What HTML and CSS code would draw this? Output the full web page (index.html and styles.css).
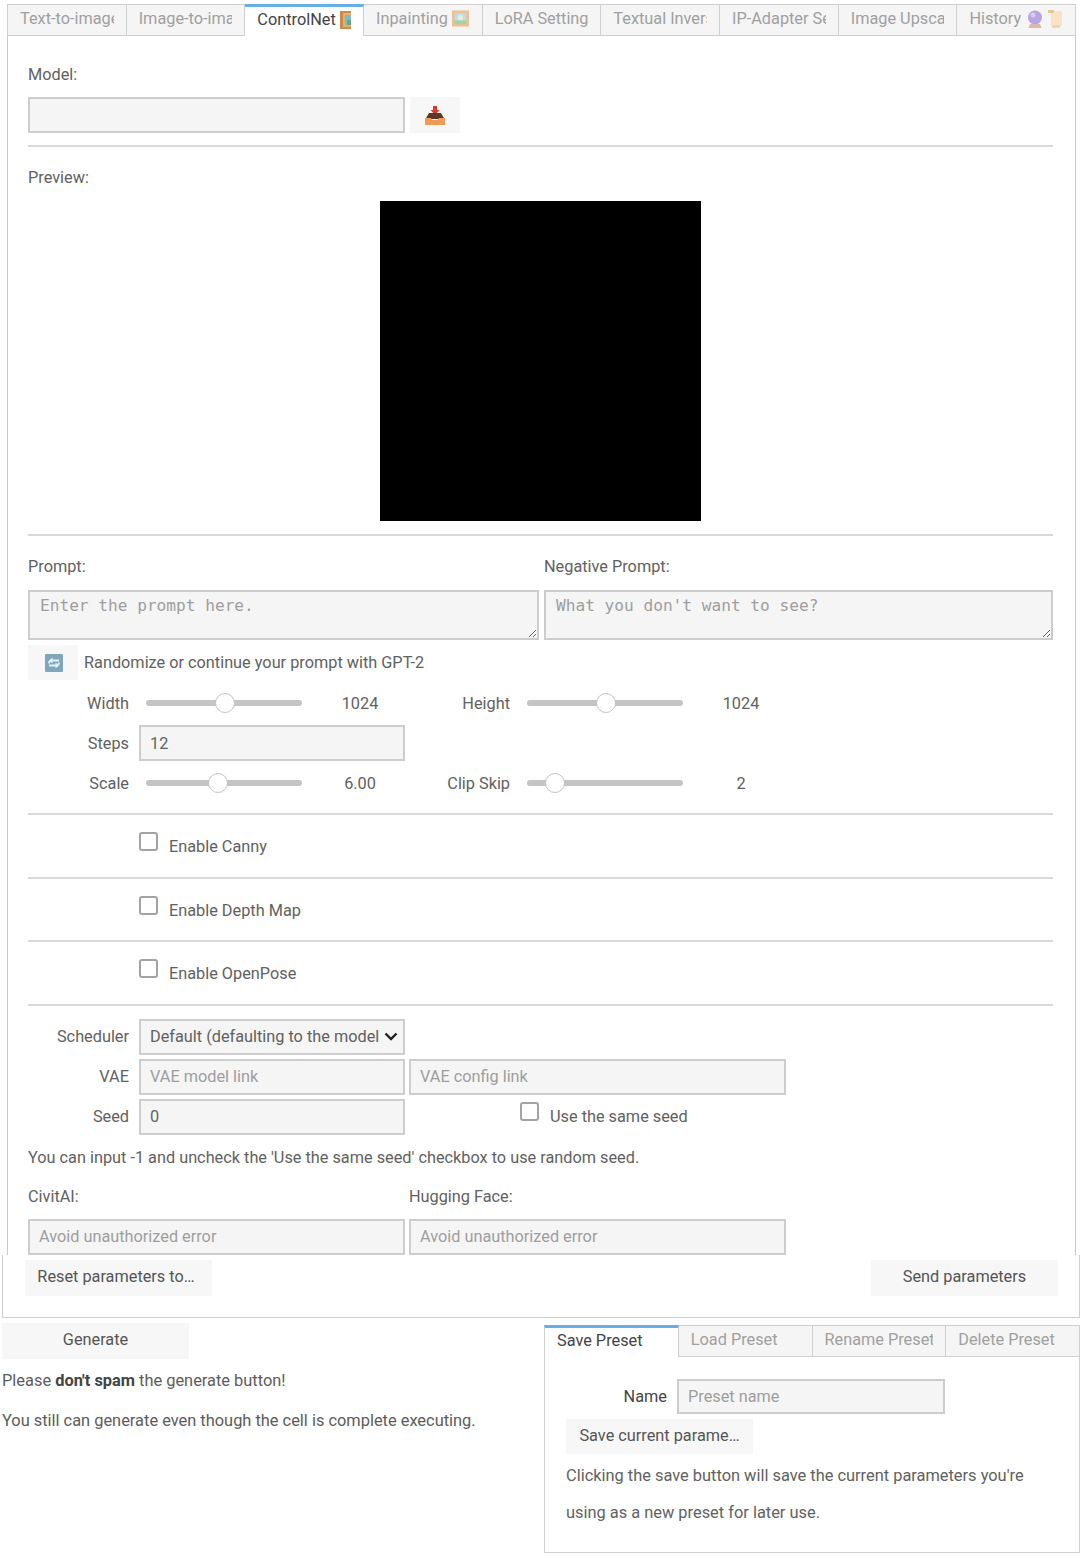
FILE: index.html
```html
<!DOCTYPE html>
<html lang="en">
<head>
    <meta charset="UTF-8">
    <meta name="viewport" content="width=device-width, initial-scale=1.0">
    <title>ControlNet</title>
    <link rel="stylesheet" href="styles.css">
</head>
<body>
    <div class="main-panel">
        <div class="tabs">
            <div class="tab"><span class="tab-text">Text-to-image</span></div>
            <div class="tab"><span class="tab-text">Image-to-image</span></div>
            <div class="tab active"><span class="tab-text">ControlNet
                <svg class="tab-icon narrow" viewBox="0 0 12 18"><rect width="12" height="18" fill="#c98a4e"/><rect x="3" y="2" width="9" height="14" fill="#e8b06a"/><rect x="5" y="4" width="7" height="10" fill="#7cb9c9"/><rect x="7" y="9" width="5" height="5" fill="#6aa57c"/></svg>
            </span></div>
            <div class="tab"><span class="tab-text">Inpainting
                <svg class="tab-icon picture" viewBox="0 0 17 16"><rect width="17" height="16" fill="#efc08e"/><rect x="2.5" y="2.5" width="12" height="11" fill="#bcdcec"/><circle cx="8.5" cy="7" r="2.6" fill="#e9eedc"/><rect x="2.5" y="10" width="12" height="3.5" fill="#a9cfa6"/></svg>
            </span></div>
            <div class="tab"><span class="tab-text">LoRA Setting</span></div>
            <div class="tab"><span class="tab-text">Textual Inversion</span></div>
            <div class="tab"><span class="tab-text">IP-Adapter Settings</span></div>
            <div class="tab"><span class="tab-text">Image Upscaler</span></div>
            <div class="tab"><span class="tab-text">History
                <svg class="tab-icon ball" viewBox="0 0 16 18"><circle cx="8" cy="7.5" r="7" fill="#b9a4e6"/><circle cx="6" cy="5" r="2.5" fill="#d9cdf5"/><path d="M3 14h10l1.5 4h-13z" fill="#dcb9a8"/></svg>
                <svg class="tab-icon scroll" viewBox="0 0 15 18"><rect x="3" y="1" width="11" height="15" fill="#fae3c4"/><rect y="0" width="6" height="3" fill="#e8c594"/><rect x="4" y="15" width="8" height="3" fill="#f0d5ae"/></svg>
            </span></div>
        </div>

        <div class="panel-body">
            <div class="label">Model:</div>
            <div class="row model-row">
                <input class="field wide" type="text">
                <button class="icon-btn">
                    <svg class="btn-icon" viewBox="0 0 20 19"><path d="M8 0h4v4h2.5L10 9 5.5 4H8z" fill="#d8392f"/><path d="M4 7h12l3.5 6H.5z" fill="#5e3626"/><path d="M0 12h6l1 2h6l1-2h6v7H0z" fill="#f09a55"/></svg>
                </button>
            </div>
            <div class="line line-model"></div>

            <div class="label preview-label">Preview:</div>
            <div class="preview"></div>
            <div class="line line-preview"></div>

            <div class="prompt-labels">
                <div class="label">Prompt:</div>
                <div class="label">Negative Prompt:</div>
            </div>
            <div class="prompts">
                <textarea class="prompt" placeholder="Enter the prompt here."></textarea>
                <textarea class="prompt" placeholder="What you don't want to see?"></textarea>
            </div>
            <div class="row random-row">
                <button class="icon-btn short">
                    <svg class="btn-icon small" viewBox="0 0 18 18"><rect width="18" height="18" rx="1" fill="#7ea6bd"/><path d="M14 6.5H7a3 3 0 0 0-3 3M4 11.5h7a3 3 0 0 0 3-3" fill="none" stroke="#e6f0f4" stroke-width="1.8"/><path d="M7.5 3.5v6L4 6.5zM10.500 8.500v6l3.500-3z" fill="#e6f0f4"/></svg>
                </button>
                <span class="random-text">Randomize or continue your prompt with GPT-2</span>
            </div>

            <div class="row sliders">
                <div class="slider-box">
                    <label class="side-label">Width</label>
                    <input class="slider" type="range" min="0" max="2020" value="1024">
                    <span class="slider-value">1024</span>
                </div>
                <div class="slider-box">
                    <label class="side-label">Height</label>
                    <input class="slider" type="range" min="0" max="2020" value="1024">
                    <span class="slider-value">1024</span>
                </div>
            </div>
            <div class="row next">
                <label class="side-label">Steps</label>
                <input class="field medium has-value" type="text" value="12">
            </div>
            <div class="row next">
                <div class="slider-box">
                    <label class="side-label">Scale</label>
                    <input class="slider" type="range" min="0" max="13.2" step="0.01" value="6">
                    <span class="slider-value">6.00</span>
                </div>
                <div class="slider-box">
                    <label class="side-label">Clip Skip</label>
                    <input class="slider" type="range" min="1" max="8.6" step="0.1" value="2">
                    <span class="slider-value">2</span>
                </div>
            </div>
            <div class="line line-scale"></div>

            <div class="check-row"><input class="check" type="checkbox"><span class="check-text">Enable Canny</span></div>
            <div class="line"></div>
            <div class="check-row"><input class="check" type="checkbox"><span class="check-text">Enable Depth Map</span></div>
            <div class="line"></div>
            <div class="check-row"><input class="check" type="checkbox"><span class="check-text">Enable OpenPose</span></div>
            <div class="line"></div>

            <div class="row scheduler-row">
                <label class="side-label">Scheduler</label>
                <select class="field medium select has-value">
                    <option>Default (defaulting to the model)</option>
                </select>
            </div>
            <div class="row next">
                <label class="side-label">VAE</label>
                <input class="field medium" type="text" placeholder="VAE model link">
                <input class="field wide config" type="text" placeholder="VAE config link">
            </div>
            <div class="row next">
                <label class="side-label">Seed</label>
                <input class="field medium has-value" type="text" value="0">
                <div class="same-seed"><input class="check" type="checkbox"><span class="check-text">Use the same seed</span></div>
            </div>
            <div class="label seed-note">You can input -1 and uncheck the 'Use the same seed' checkbox to use random seed.</div>

            <div class="token-labels">
                <div class="label">CivitAI:</div>
                <div class="label">Hugging Face:</div>
            </div>
            <div class="row tokens">
                <input class="field wide" type="text" placeholder="Avoid unauthorized error">
                <input class="field wide" type="text" placeholder="Avoid unauthorized error">
            </div>
        </div>
    </div>

    <div class="actions">
        <button class="btn reset-btn">Reset parameters to…</button>
        <button class="btn">Send parameters</button>
    </div>

    <div class="bottom">
        <div class="bottom-left">
            <button class="btn">Generate</button>
            <p class="hint first">Please <strong>don't spam</strong> the generate button!</p>
            <p class="hint">You still can generate even though the cell is complete executing.</p>
        </div>
        <div class="preset-panel">
            <div class="tabs">
                <div class="tab active"><span class="tab-text">Save Preset</span></div>
                <div class="tab"><span class="tab-text">Load Preset</span></div>
                <div class="tab"><span class="tab-text">Rename Preset</span></div>
                <div class="tab"><span class="tab-text">Delete Preset</span></div>
            </div>
            <div class="preset-body">
                <div class="name-row">
                    <label class="side-label dark">Name</label>
                    <input class="field name-field" type="text" placeholder="Preset name">
                </div>
                <button class="btn save-btn">Save current parame…</button>
                <p class="preset-text first">Clicking the save button will save the current parameters you're</p>
                <p class="preset-text">using as a new preset for later use.</p>
            </div>
        </div>
    </div>
</body>
</html>
```

FILE: styles.css
```css
* {
    box-sizing: border-box;
}
body {
    margin: 0;
    background: white;
    font-family: Roboto, "Liberation Sans", sans-serif;
    font-size: 16.3px;
    line-height: 24px;
    color: #616161;
}

/* tabs */
.main-panel {
    margin: 4px 4px 0 7px;
    height: 1251px;
    overflow: hidden;
}
.tabs {
    display: flex;
    height: 32px;
}
.tab {
    flex: 1;
    min-width: 0;
    padding: 0 12px;
    background: #f5f5f5;
    border: 1px solid #cfcfcf;
    border-left: none;
    color: #a0a0a0;
    line-height: 28px;
}
.tab:first-child {
    border-left: 1px solid #cfcfcf;
}
.tab.active {
    background: white;
    color: #444;
    border-top: 3px solid #64b0e6;
    border-bottom: none;
    line-height: 26px;
}
.tab-text {
    display: block;
    overflow: hidden;
    white-space: nowrap;
}
.tab-icon {
    display: inline-block;
    width: 16px;
    height: 18px;
    vertical-align: -4px;
}
.tab-icon.narrow {
    width: 12px;
}
.tab-icon.picture {
    width: 17px;
    height: 17px;
    vertical-align: -3px;
}
.tab-icon.ball {
    margin-left: 2px;
}
.tab-icon.scroll {
    width: 15px;
    margin-left: 1px;
}

/* main form */
.panel-body {
    height: 1219px;
    padding: 27px 22px 0 20px;
    border-left: 1px solid #c8c8c8;
    border-right: 1px solid #c8c8c8;
}
.label {
    height: 24px;
    white-space: nowrap;
}
.row {
    display: flex;
    align-items: center;
    height: 36px;
}
.next {
    margin-top: 4px;
}
.model-row {
    margin-top: 10px;
}
.line {
    height: 2px;
    background: #d9d9d9;
}
.line-model {
    margin-top: 12px;
}
.preview-label {
    margin-top: 19px;
}
.preview {
    width: 321px;
    height: 320px;
    margin: 11px auto 0;
    background: black;
}
.line-preview {
    margin-top: 13px;
}
.line-scale {
    margin-top: 12px;
}
.prompt-labels {
    display: flex;
    margin-top: 19px;
}
.prompt-labels .label {
    flex: none;
    width: 516px;
}
.prompts {
    display: flex;
    gap: 5px;
    margin-top: 11px;
}
.prompt {
    width: 511px;
    height: 50px;
    padding: 3px 10px;
    background: #f5f5f5;
    border: 2px solid #cdcdcd;
    border-radius: 0;
    font-family: "DejaVu Sans Mono", "Liberation Mono", monospace;
    font-size: 16.15px;
    line-height: 22px;
}
.prompt:last-child {
    width: 509px;
}
.prompt::placeholder,
.field::placeholder {
    color: #9e9e9e;
    opacity: 1;
}
.field {
    height: 36px;
    padding: 0 9px;
    background: #f5f5f5;
    border: 2px solid #cdcdcd;
    border-radius: 0;
    font-family: Roboto, "Liberation Sans", sans-serif;
    font-size: 16.3px;
    color: #616161;
}
.field.wide {
    width: 377px;
}
.field.medium {
    width: 266px;
}
.field.config {
    margin-left: 4px;
}
.select {
    -webkit-appearance: none;
    appearance: none;
    padding: 0 24px 0 9px;
    background: #f5f5f5 url("data:image/svg+xml,%3Csvg xmlns='http://www.w3.org/2000/svg' viewBox='0 0 14 9'%3E%3Cpath d='M1.500 1.500 7 7l5.500-5.500' fill='none' stroke='%23222' stroke-width='2.400'/%3E%3C/svg%3E") no-repeat right 5px center / 14px 9px;
    color: #616161;
}
.icon-btn {
    display: flex;
    align-items: center;
    justify-content: center;
    width: 50px;
    height: 36px;
    margin-left: 5px;
    padding: 0;
    background: #f7f7f7;
    border: none;
}
.icon-btn.short {
    height: 35px;
    margin-left: 0;
    padding-left: 2px;
}
.btn-icon {
    width: 20px;
    height: 19px;
}
.btn-icon.small {
    width: 18px;
    height: 18px;
}
.random-row {
    height: 35px;
    margin-top: 5px;
}
.random-text {
    margin-left: 6px;
}
.sliders {
    margin-top: 5px;
}
.slider-box {
    display: flex;
    align-items: center;
    flex: none;
    width: 377px;
    margin-right: 4px;
}
.side-label {
    flex: none;
    width: 101px;
    margin-right: 10px;
    padding-top: 1px;
    text-align: right;
    white-space: nowrap;
}
.side-label.dark {
    padding-top: 0;
    color: #444;
}
.slider {
    -webkit-appearance: none;
    appearance: none;
    width: 156px;
    height: 24px;
    margin: 0 13px 0 7px;
    background: transparent;
}
.slider::-webkit-slider-runnable-track {
    height: 6px;
    background: #c4c4c4;
    border-radius: 3px;
}
.slider::-webkit-slider-thumb {
    -webkit-appearance: none;
    width: 20px;
    height: 20px;
    margin-top: -7px;
    background: white;
    border: 1.5px solid #c4c4c4;
    border-radius: 50%;
}
.slider-value {
    width: 90px;
    padding-top: 1px;
    text-align: center;
}

/* checkboxes */
.check {
    -webkit-appearance: none;
    appearance: none;
    flex: none;
    width: 19px;
    height: 19px;
    margin: 0;
    background: white;
    border: 2px solid #a3a3a3;
    border-radius: 3px;
}
.check-row {
    display: flex;
    height: 61.67px;
    padding: 17px 0 0 111px;
}
.check-text {
    margin: 3px 0 0 11px;
    white-space: nowrap;
}
.scheduler-row {
    margin-top: 13px;
}
.same-seed {
    display: flex;
    margin: -2px 0 0 115px;
}
.seed-note {
    margin-top: 11px;
}
.token-labels {
    display: flex;
    margin-top: 15px;
}
.token-labels .label {
    flex: none;
    width: 381px;
}
.tokens {
    gap: 4px;
    margin-top: 10px;
}

/* buttons under the panel */
.btn {
    width: 187px;
    height: 36px;
    padding: 0 0 3px;
    background: #f7f7f7;
    border: none;
    font-family: Roboto, "Liberation Sans", sans-serif;
    font-size: 16.3px;
    color: #555;
}
.reset-btn {
    padding-right: 5px;
}
.actions {
    display: flex;
    justify-content: space-between;
    height: 63px;
    margin-left: 2px;
    padding: 5px 21px 0 22px;
    border: 1px solid #cfcfcf;
    border-top: none;
}

/* bottom half */
.bottom {
    display: flex;
}
.bottom-left {
    flex: none;
    width: 544px;
    padding: 5px 0 0 2px;
}
.hint {
    margin: 16px 0 0;
    font-size: 16.4px;
    color: #5c5c5c;
}
.hint.first {
    margin-top: 10px;
}
.hint strong {
    color: #444;
}
.preset-panel {
    flex: 1;
    min-width: 0;
    margin-top: 7px;
}
.preset-body {
    height: 196px;
    padding: 22px 0 0 21px;
    border: 1px solid #cfcfcf;
    border-top: none;
}
.name-row {
    display: flex;
    align-items: center;
}
.name-field {
    width: 268px;
    height: 35px;
}
.save-btn {
    height: 35px;
    margin-top: 5px;
}
.preset-text {
    margin: 13px 0 0;
    font-size: 16.4px;
    white-space: nowrap;
}
.preset-text.first {
    margin-top: 10px;
}
```
